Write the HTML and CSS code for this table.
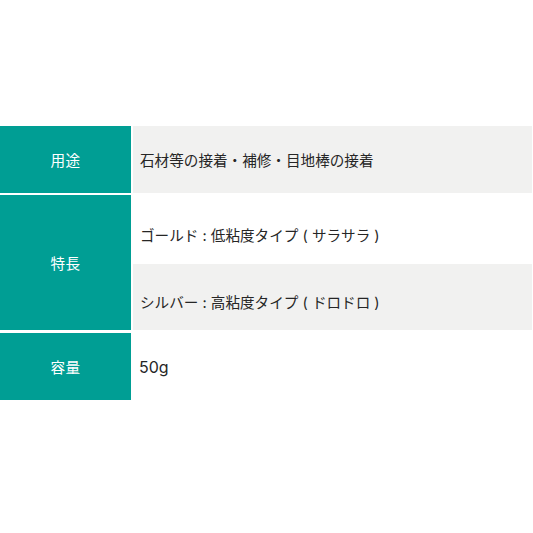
FILE: index.html
```html
<!DOCTYPE html>
<html lang="ja">
<head>
<meta charset="utf-8">
<link rel="stylesheet" href="styles.css">
</head>
<body>
<div class="spec">
  <div class="row row-1">
    <div class="label">用途</div>
    <div class="value gray">石材等の接着・補修・目地棒の接着</div>
  </div>
  <div class="row row-2">
    <div class="label">特長</div>
    <div class="values">
      <div class="value sub sub-gold">ゴールド : 低粘度タイプ ( サラサラ )</div>
      <div class="value sub sub-silver gray">シルバー : 高粘度タイプ ( ドロドロ )</div>
    </div>
  </div>
  <div class="row row-3">
    <div class="label">容量</div>
    <div class="value num">50g</div>
  </div>
</div>
</body>
</html>
```
FILE: styles.css
```css
html, body {
  margin: 0;
  padding: 0;
  background: #ffffff;
}
body {
  font-family: "Inter", "Noto Sans CJK JP", sans-serif;
  width: 533px;
  height: 533px;
}
.spec {
  padding-top: 126px;
  width: 532px;
  display: flex;
  flex-direction: column;
  gap: 2px;
}
.row {
  display: flex;
  gap: 2px;
}
.row-1 { height: 67px; }
.row-2 { height: 135px; }
.row-3 { height: 67px; margin-top: 1px; }
.label {
  width: 131px;
  flex: none;
  background: #009e94;
  color: #ffffff;
  font-size: 14.6px;
  display: flex;
  align-items: center;
  justify-content: center;
  letter-spacing: 0.3px;
}
.value {
  flex: 1;
  display: flex;
  align-items: center;
  padding-left: 7px;
  color: #262626;
  font-size: 14.6px;
}
.num {
  font-size: 16px;
  padding-left: 6px;
}
.gray { background: #f1f1f0; }
.values {
  flex: 1;
  display: flex;
  flex-direction: column;
}
.sub {
  box-sizing: border-box;
}
.sub-gold { height: 72px; margin-top: -2px; padding-top: 13px; }
.sub-silver { height: 65px; padding-top: 9px; }
```
